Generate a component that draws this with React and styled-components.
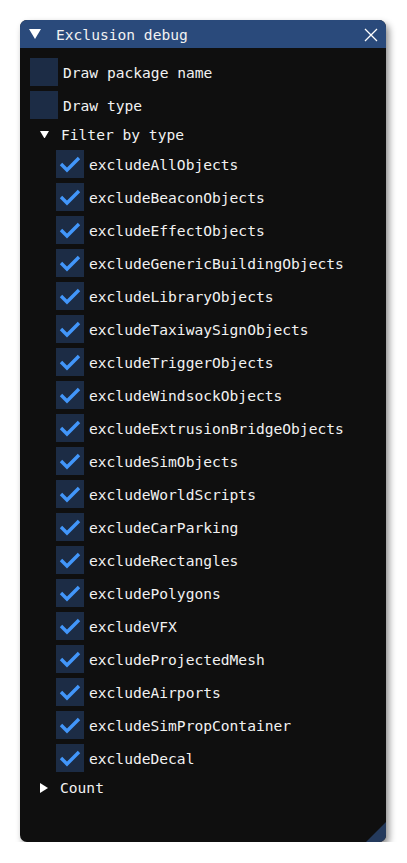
import styled, { createGlobalStyle } from "styled-components"

const Global = createGlobalStyle`
body{
  margin:0;
  background:#ffffff;
}
`

const Window = styled.div`
position:relative;
margin:20px 0 0 20px;
width:366px;
height:822px;
background:#0f0f0f;
border-radius:7px;
overflow:hidden;
box-shadow:3px 4px 7px rgba(0,0,0,0.45);
font-family:"DejaVu Sans Mono", "Liberation Mono", monospace;
font-size:14.6px;
color:#f2f2f2;
display:flex;
flex-direction:column;
`

const TitleBar = styled.div`
height:28px;
background:#2a4a7b;
display:flex;
align-items:center;
padding:1px 8px 0 9px;
box-sizing:border-box;
`

const Title = styled.span`
flex:1;
margin-left:15px;
`

const Body = styled.div`
padding:10px 10px;
display:flex;
flex-direction:column;
gap:5px;
`

const Row = styled.div`
display:flex;
align-items:center;
gap:5px;
margin-left:${(p) => p.$indent || 0}px;
& > span{
  padding-top:1px;
}
`

const Box = styled.div`
width:28px;
height:28px;
background:#1c2c45;
display:flex;
align-items:center;
justify-content:center;
flex-shrink:0;
`

const Node = styled.div`
height:21px;
display:flex;
align-items:center;
padding-left:10px;
gap:12px;
`

const Grip = styled.div`
position:absolute;
right:0;
bottom:0;
width:20px;
height:20px;
background:#243a5c;
clip-path:polygon(100% 0, 100% 100%, 0 100%);
`

const TriDown = ({ size = 12 }) => (
  <svg width={size} height={size * 0.85} viewBox="0 0 12 10">
    <polygon points="0,0 12,0 6,10" fill="#fff" />
  </svg>
)

const TriRight = () => (
  <svg width="8" height="10" viewBox="0 0 8 10">
    <polygon points="0,0 8,5 0,10" fill="#fff" />
  </svg>
)

const Close = () => (
  <svg width="14" height="14" viewBox="0 0 14 14">
    <path d="M1 1 L13 13 M13 1 L1 13" stroke="#fff" strokeWidth="1.3" />
  </svg>
)

const Check = () => (
  <svg width="22" height="18" viewBox="0 0 22 18">
    <polyline points="2,9 8,15 20,3" fill="none" stroke="#4296fa" strokeWidth="3.4" />
  </svg>
)

const filters = [
  "excludeAllObjects",
  "excludeBeaconObjects",
  "excludeEffectObjects",
  "excludeGenericBuildingObjects",
  "excludeLibraryObjects",
  "excludeTaxiwaySignObjects",
  "excludeTriggerObjects",
  "excludeWindsockObjects",
  "excludeExtrusionBridgeObjects",
  "excludeSimObjects",
  "excludeWorldScripts",
  "excludeCarParking",
  "excludeRectangles",
  "excludePolygons",
  "excludeVFX",
  "excludeProjectedMesh",
  "excludeAirports",
  "excludeSimPropContainer",
  "excludeDecal",
]

const App = () => {
  return (
    <>
      <Global />
      <Window>
        <TitleBar>
          <TriDown />
          <Title>Exclusion debug</Title>
          <Close />
        </TitleBar>
        <Body>
          <Row>
            <Box />
            <span>Draw package name</span>
          </Row>
          <Row>
            <Box />
            <span>Draw type</span>
          </Row>
          <Node>
            <TriDown size={9} />
            <span>Filter by type</span>
          </Node>
          {filters.map((f) => (
            <Row key={f} $indent={26}>
              <Box>
                <Check />
              </Box>
              <span>{f}</span>
            </Row>
          ))}
          <Node>
            <TriRight />
            <span>Count</span>
          </Node>
        </Body>
        <Grip />
      </Window>
    </>
  )
}

export default App
